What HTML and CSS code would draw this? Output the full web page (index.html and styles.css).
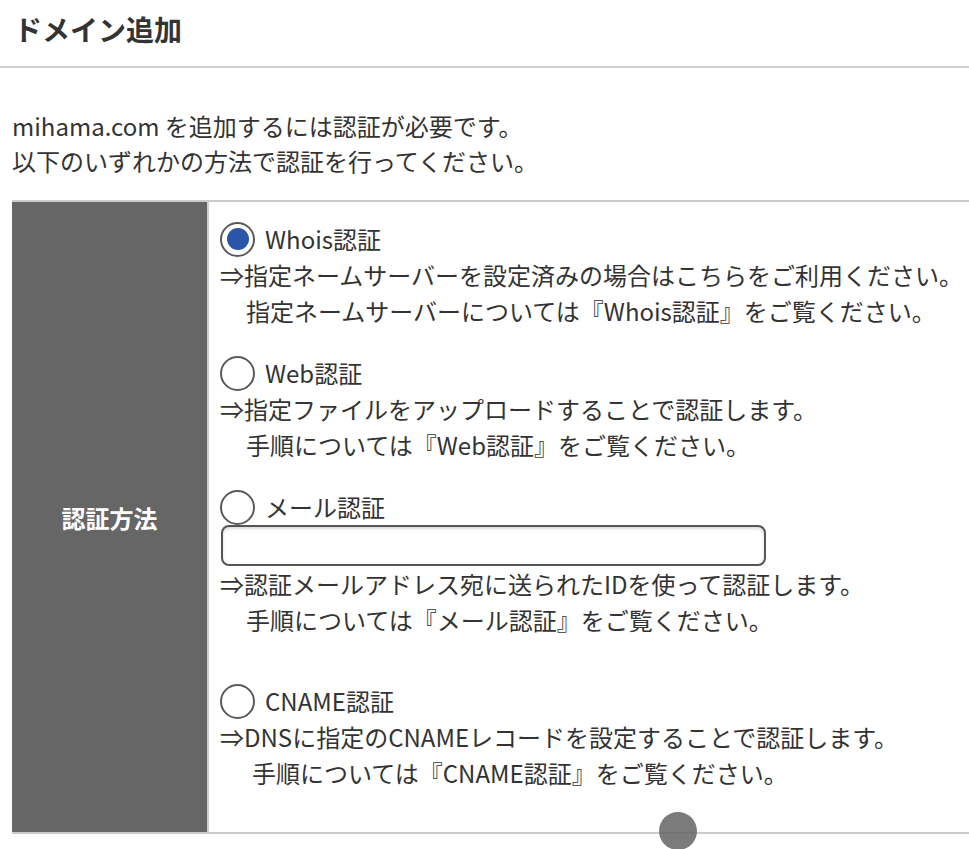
FILE: index.html
```html
<!DOCTYPE html>
<html lang="ja">
<head>
<meta charset="utf-8">
<title>ドメイン追加</title>
<link rel="stylesheet" href="styles.css">
</head>
<body>
<div class="page">
  <header class="head">ドメイン追加</header>
  <p class="lead">mihama.com を追加するには認証が必要です。<br>以下のいずれかの方法で認証を行ってください。</p>
  <div class="table">
    <div class="th">認証方法</div>
    <div class="td">
      <div class="opt">
        <label class="radio-row"><span class="radio checked"></span><span>Whois認証</span></label>
        <div class="line">⇒指定ネームサーバーを設定済みの場合はこちらをご利用ください。</div>
        <div class="line sub">指定ネームサーバーについては『Whois認証』をご覧ください。</div>
      </div>
      <div class="opt">
        <label class="radio-row"><span class="radio"></span><span>Web認証</span></label>
        <div class="line">⇒指定ファイルをアップロードすることで認証します。</div>
        <div class="line sub">手順については『Web認証』をご覧ください。</div>
      </div>
      <div class="opt mail">
        <label class="radio-row"><span class="radio"></span><span>メール認証</span></label>
        <div class="input"></div>
        <div class="line">⇒認証メールアドレス宛に送られたIDを使って認証します。</div>
        <div class="line sub">手順については『メール認証』をご覧ください。</div>
      </div>
      <div class="opt">
        <label class="radio-row"><span class="radio"></span><span>CNAME認証</span></label>
        <div class="line">⇒DNSに指定のCNAMEレコードを設定することで認証します。</div>
        <div class="line sub wide">手順については『CNAME認証』をご覧ください。</div>
      </div>
    </div>
  </div>
  <div class="scroll-dot"></div>
</div>
</body>
</html>
```

FILE: styles.css
```css
html, body {
  margin: 0;
  padding: 0;
  background: #fff;
}

.page {
  position: relative;
  width: 969px;
  height: 849px;
  overflow: hidden;
  font-family: "Noto Sans CJK JP", "Noto Sans", sans-serif;
  color: #333;
}

.head {
  padding: 10px 14px 18px;
  font-size: 28px;
  line-height: 38px;
  font-weight: bold;
  border-bottom: 2px solid #cfcfcf;
  color: #333;
}

.lead {
  margin: 40px 0 22px 12px;
  font-size: 24px;
  line-height: 35px;
}

.table {
  margin-left: 12px;
  display: flex;
  border-top: 2px solid #cccccc;
  border-bottom: 2px solid #cccccc;
}

.th {
  width: 195px;
  flex: none;
  background: #666666;
  color: #fff;
  font-weight: bold;
  font-size: 24px;
  display: flex;
  align-items: center;
  justify-content: center;
  border-right: 2px solid #d0d0d0;
}

.td {
  flex: 1;
  padding: 19px 0 41px 11px;
  display: flex;
  flex-direction: column;
  gap: 26px;
  font-size: 24px;
  line-height: 36px;
}

.opt.mail {
  margin-bottom: 19px;
}

.radio-row {
  display: flex;
  align-items: center;
  gap: 10px;
  height: 36px;
}

.radio {
  width: 31px;
  height: 31px;
  border: 2px solid #5a5a5a;
  border-radius: 50%;
  display: flex;
  align-items: center;
  justify-content: center;
  flex: none;
  background: #fff;
}

.radio.checked::after {
  content: "";
  width: 22px;
  height: 22px;
  border-radius: 50%;
  background: #2a55a9;
}

.line {
  white-space: nowrap;
}

.line.sub {
  padding-left: 26px;
}

.line.sub.wide {
  padding-left: 32px;
}

.input {
  width: 541px;
  height: 37px;
  border: 2px solid #555;
  border-radius: 8px;
  box-shadow: inset 0 2px 3px rgba(0, 0, 0, 0.15);
  margin: 0 0 0 1px;
}

.scroll-dot {
  position: absolute;
  left: 659px;
  top: 812px;
  width: 38px;
  height: 38px;
  border-radius: 50%;
  background: rgba(100, 100, 100, 0.85);
}
```
